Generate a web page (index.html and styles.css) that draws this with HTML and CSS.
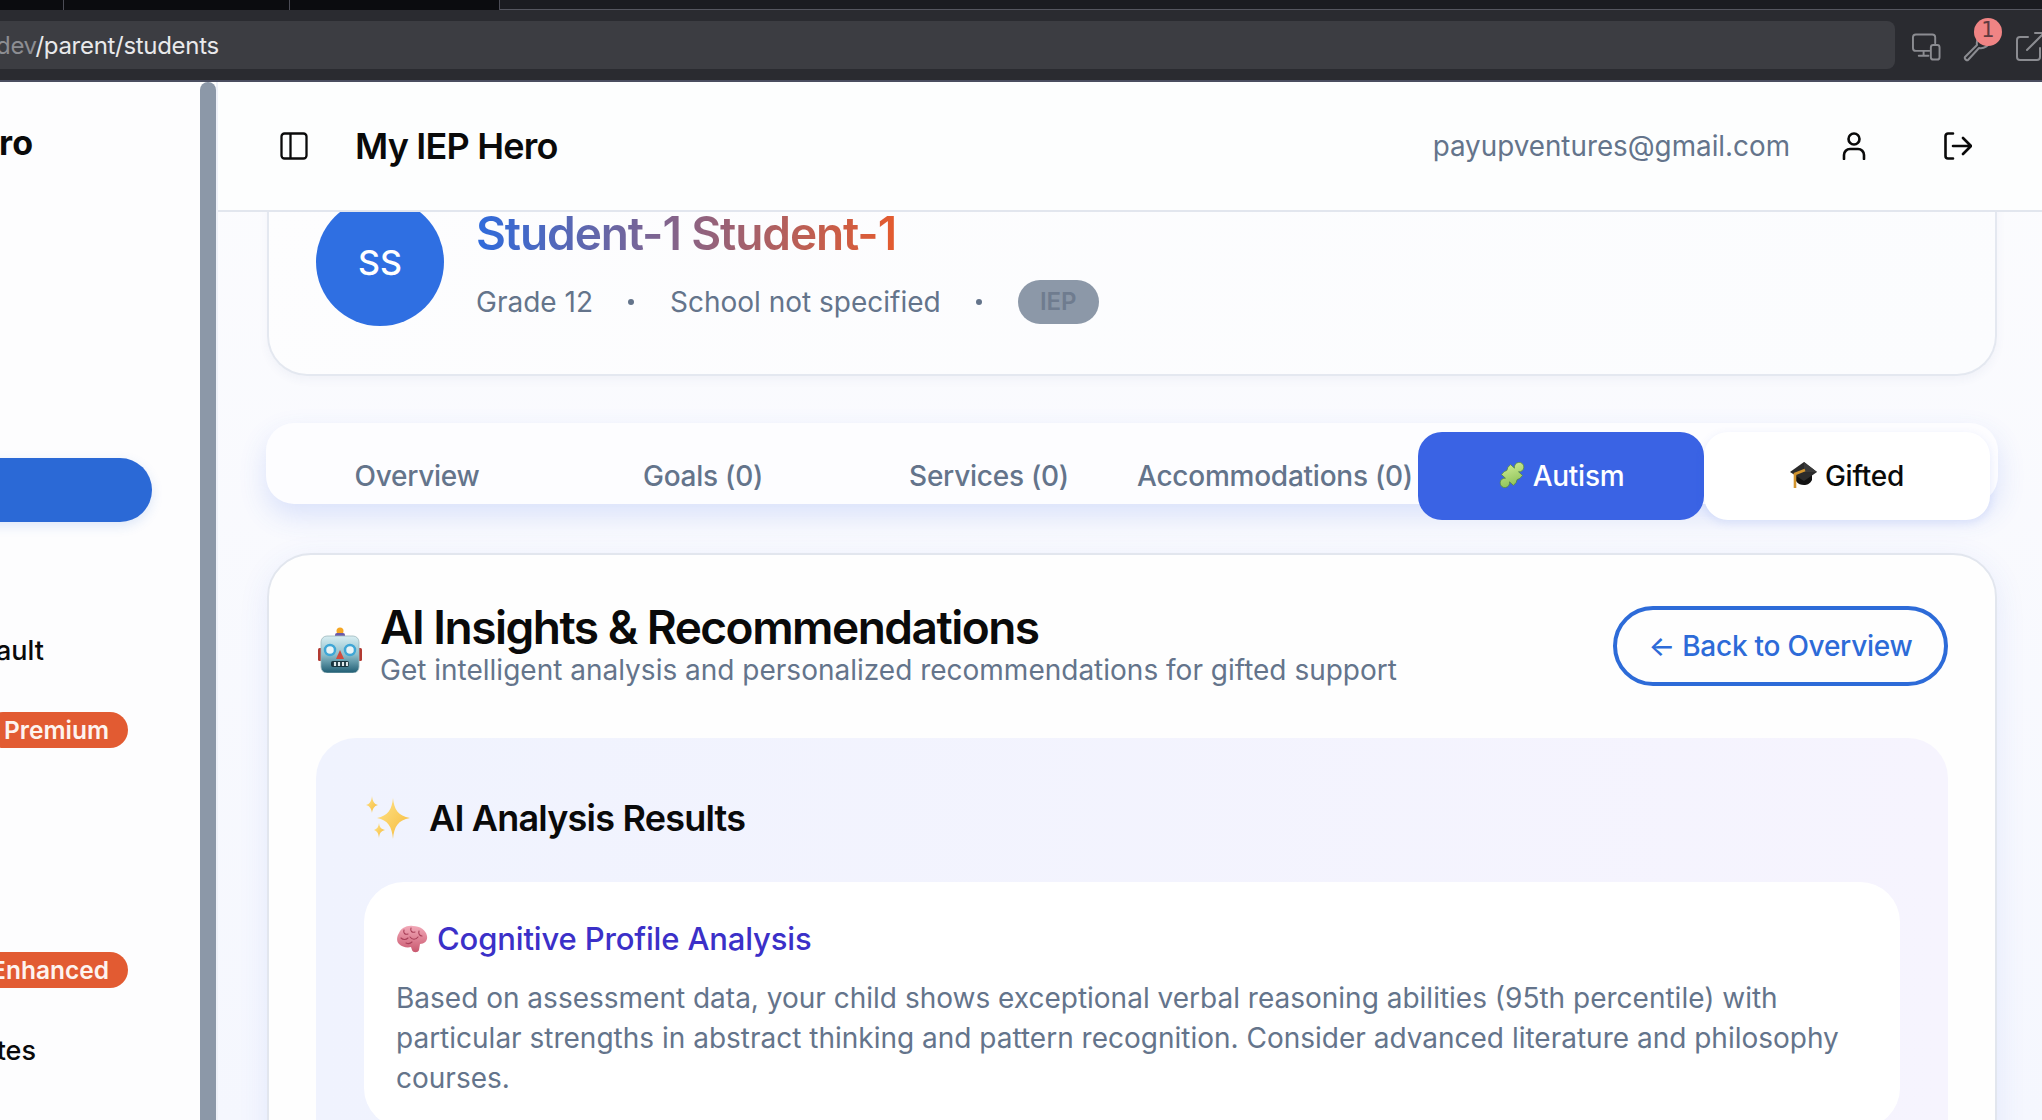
FILE: index.html
```html
<!DOCTYPE html>
<html lang="en">
<head>
<meta charset="utf-8">
<title>My IEP Hero</title>
<link rel="stylesheet" href="styles.css">
</head>
<body>
<div class="tabstrip">
  <div class="tabseg seg-a"></div>
  <div class="tabseg seg-b"></div>
  <div class="tabseg seg-c"></div>
  <div class="tabseg seg-rest"></div>
</div>
<div class="toolbar">
  <div class="addr"><span class="addr-dim">dev</span><span>/parent/students</span></div>
  <div class="tool-icons">
    <svg class="ti ti-dev" viewBox="0 0 30 28" fill="none" stroke="#8b8c91" stroke-width="2" stroke-linecap="round" stroke-linejoin="round"><path d="M18 18H4a3 3 0 0 1-3-3V4a3 3 0 0 1 3-3h17a3 3 0 0 1 3 3v6"/><path d="M12 18v5M7 23h10"/><rect x="19.500" y="12" width="9" height="15" rx="2.500"/></svg>
    <span class="wrench">
      <svg class="ti ti-wr" viewBox="0 0 30 30" fill="none" stroke="#8b8c91" stroke-width="2" stroke-linecap="round" stroke-linejoin="round"><path d="M2 25 14 13c-1-5 2-10 8-11l6 1-1 5c-1 6-6 9-11 8L5 28c-1 1-4-1-3-3z"/></svg>
      <span class="badge">1</span>
    </span>
    <svg class="ti ti-ext" viewBox="0 0 30 30" fill="none" stroke="#8b8c91" stroke-width="2" stroke-linecap="round" stroke-linejoin="round"><path d="M13 5H5a3 3 0 0 0-3 3v17a3 3 0 0 0 3 3h17a3 3 0 0 0 3-3v-9"/><path d="M12 18 29 1M20 1h9v9"/></svg>
  </div>
</div>
<div class="app">
  <aside class="sidebar">
    <div class="side-brand">My IEP Hero</div>
    <div class="side-active"></div>
    <div class="side-link side-vault">Vault</div>
    <div class="side-pill pill-premium">Premium</div>
    <div class="side-pill pill-enhanced">Enhanced</div>
    <div class="side-link side-notes">Notes</div>
  </aside>
  <div class="scrollbar"></div>
  <main class="main">
    <header class="topbar">
      <svg class="panel-icon" viewBox="0 0 28 28" fill="none" stroke="#0a0a0a" stroke-width="2.300" stroke-linejoin="round"><rect x="1.500" y="1.500" width="25" height="25" rx="3"/><path d="M10.500 1.500v25"/></svg>
      <div class="app-title">My IEP Hero</div>
      <div class="email">payupventures@gmail.com</div>
      <svg class="user-icon" viewBox="0 0 24 28" fill="none" stroke="#0a0a0a" stroke-width="2.600" stroke-linecap="round"><circle cx="12" cy="7" r="5.500"/><path d="M2 27v-4a6 6 0 0 1 6-6h8a6 6 0 0 1 6 6v4"/></svg>
      <svg class="logout-icon" viewBox="0 0 28 28" fill="none" stroke="#0a0a0a" stroke-width="2.600" stroke-linecap="round" stroke-linejoin="round"><path d="M9 1.500H4a2.500 2.500 0 0 0-2.500 2.500v20A2.500 2.500 0 0 0 4 26.500h5"/><path d="M9 14h18M19 6l8 8-8 8"/></svg>
    </header>
    <div class="content">
      <section class="student-card">
        <div class="avatar">SS</div>
        <div class="student-info">
          <h1 class="student-name">Student-1 Student-1</h1>
          <div class="student-meta">
            <span>Grade 12</span>
            <i class="dot"></i>
            <span>School not specified</span>
            <i class="dot"></i>
            <span class="iep">IEP</span>
          </div>
        </div>
      </section>

      <nav class="tabs">
        <div class="tab">Overview</div>
        <div class="tab">Goals (0)</div>
        <div class="tab">Services (0)</div>
        <div class="tab">Accommodations (0)</div>
        <div class="tab tab-active">
          <svg class="tab-emoji" viewBox="0 0 28 26"><defs><linearGradient id="pz" x1="0" y1="0" x2="1" y2="1"><stop offset="0" stop-color="#d3ee98"/><stop offset="1" stop-color="#84bd50"/></linearGradient></defs><path transform="rotate(42 14 13) translate(14 13) scale(1.350) translate(-14 -13)" d="M8 8h4a3.500 3.500 0 1 1 4 0h4v3a3 3 0 0 0 0 4v3h-4a3.500 3.500 0 1 1-4 0h-4v-3a3 3 0 0 0 0-4z" fill="url(#pz)" stroke="#55873a" stroke-width=".5"/></svg>
          Autism
        </div>
        <div class="tab tab-gifted">
          <svg class="tab-emoji" viewBox="0 0 28 26"><path d="M6 13v6c2 3 5 4 8 4s6-1 8-5v-6z" fill="#111"/><path d="M14 0 27 10 14 19 0 10z" fill="#2b2b2b"/><path d="M14 0 27 10 14 10z" fill="#3a3a3a"/><path d="M15 8 5 12v14" fill="none" stroke="#d2952f" stroke-width="2.600"/></svg>
          Gifted
        </div>
      </nav>

      <section class="insights">
        <div class="insights-head">
          <svg class="robot" viewBox="0 0 44 46"><defs><linearGradient id="rb" x1="0" y1="0" x2="0" y2="1"><stop offset="0" stop-color="#d8eef2"/><stop offset=".5" stop-color="#8fc0cc"/><stop offset="1" stop-color="#1f5d73"/></linearGradient></defs><rect x="0" y="21" width="5" height="13" rx="1.500" fill="#b23a32"/><rect x="39" y="21" width="5" height="13" rx="1.500" fill="#b23a32"/><circle cx="22" cy="4" r="3.500" fill="#f5a623"/><rect x="17" y="6" width="10" height="5" rx="2" fill="#6b5aa8"/><rect x="3" y="9" width="38" height="37" rx="6" fill="url(#rb)" stroke="#9db8bd" stroke-width=".8"/><circle cx="12" cy="23" r="5" fill="#e8f4f7" stroke="#3fa6d6" stroke-width="2.500"/><circle cx="32" cy="23" r="5" fill="#e8f4f7" stroke="#3fa6d6" stroke-width="2.500"/><path d="M22 23l4 9h-8z" fill="#d24a3c"/><rect x="13" y="34" width="18" height="6" rx="2" fill="#17333d"/><path d="M17 35v4M21 35v4M25 35v4M29 35v4" stroke="#dfe9ec" stroke-width="2.200"/></svg>
          <div class="insights-text">
            <h2 class="insights-title">AI Insights &amp; Recommendations</h2>
            <p class="insights-sub">Get intelligent analysis and personalized recommendations for gifted support</p>
          </div>
          <div class="back-btn">← Back to Overview</div>
        </div>

        <div class="panel">
          <div class="panel-head">
            <svg class="sparkles" viewBox="0 0 44 44"><defs><linearGradient id="sp" x1="0" y1="0" x2="1" y2="1"><stop offset="0" stop-color="#ffe48a"/><stop offset="1" stop-color="#f5b93a"/></linearGradient></defs><path d="M27 2c1 11 5 18 17 20-12 2-16 9-17 21-1-12-5-19-16-21 11-2 15-9 16-20z" fill="url(#sp)"/><path d="M6 0c.5 5 2 8 6 9-4 1-5.500 4-6 8-.5-4-2-7-6-8 4-1 5.500-4 6-9z" fill="url(#sp)"/><path d="M13 27c.5 4 2 6 6 7-4 1-5.500 3-6 8-.5-5-2-7-5-8 3-1 4.500-3 5-7z" fill="url(#sp)"/></svg>
            <h3 class="panel-title">AI Analysis Results</h3>
          </div>

          <article class="result">
            <h4 class="result-title">
              <svg class="brain" viewBox="0 0 32 28"><defs><linearGradient id="br" x1="0" y1="0" x2="0" y2="1"><stop offset="0" stop-color="#f2a9b8"/><stop offset="1" stop-color="#c9586f"/></linearGradient></defs><path d="M3 8c2-5 8-8 14-7 7 0 13 4 14 10 1 5-3 8-7 8l-1 6c-1 3-6 3-7 0l-1-3c-4 1-9 0-12-3-3-3-2-8 0-11z" fill="url(#br)"/><path d="M8 5c-1 3 1 5 4 4M15 3c-1 3 1 5 4 4M23 6c-1 3 1 5 3 5M5 13c2 2 5 2 7 0M14 12c2 3 6 3 8 0M10 18c2 1 4 1 6-1" fill="none" stroke="#a83f58" stroke-width="1.100" stroke-linecap="round"/></svg>
              Cognitive Profile Analysis
            </h4>
            <p class="result-body">Based on assessment data, your child shows exceptional verbal reasoning abilities (95th percentile) with particular strengths in abstract thinking and pattern recognition. Consider advanced literature and philosophy courses.</p>
          </article>
        </div>
      </section>
    </div>
  </main>
</div>
</body>
</html>
```

FILE: styles.css
```css
* { box-sizing: border-box; }
html, body { margin: 0; height: 100%; overflow: hidden; }
body { display: flex; flex-direction: column; font-family: Inter, "Liberation Sans", sans-serif; background: #fff; color: #0a0a0a; }
h1, h2, h3, h4, p { margin: 0; }

.tabstrip { display: flex; height: 10px; flex: none; }
.tabseg { height: 10px; background: #0b0c0f; border-right: 1px solid #4b4c55; }
.seg-a { width: 64px; }
.seg-b { width: 226px; }
.seg-c { width: 210px; }
.seg-rest { flex: 1; background: #1b1c21; border-right: 0; border-bottom: 1px solid #55565f; }

.toolbar { flex: none; height: 72px; background: #2a2b30; border-bottom: 2px solid #4a4e60; display: flex; align-items: flex-start; padding-top: 11px; overflow: hidden; }
.addr { width: 1895px; height: 48px; flex: none; background: #3c3d42; border-radius: 0 8px 8px 0; color: #e9e9eb; font-size: 24px; line-height: 50px; letter-spacing: -.3px; white-space: nowrap; }
.addr-dim { color: #8c8d92; margin-left: -4px; }
.tool-icons { display: flex; align-items: center; gap: 22px; margin-left: 17px; margin-top: 11px; flex: none; }
.ti { display: block; height: 28px; }
.ti-dev { width: 29px; }
.ti-wr { width: 30px; height: 30px; }
.ti-ext { width: 30px; height: 30px; }
.wrench { position: relative; display: block; }
.badge { position: absolute; left: 11px; top: -14px; width: 28px; height: 28px; border-radius: 50%; background: #f08484; color: #5e3b40; font-family: "DejaVu Sans", sans-serif; font-size: 21px; line-height: 25px; text-align: center; }

.app { flex: 1; display: flex; min-height: 0; }
.sidebar { width: 200px; flex: none; background: #fdfdfe; overflow: hidden; display: flex; flex-direction: column; align-items: flex-end; }
.side-brand { font-size: 34px; font-weight: 700; line-height: 44px; margin-top: 39px; margin-right: 167px; white-space: nowrap; }
.side-active { width: 260px; height: 64px; margin-top: 293px; margin-right: 48px; flex: none; border-radius: 32px; background: #2b69d6; box-shadow: 0 4px 12px rgba(43,105,214,.15); }
.side-link { font-size: 27px; font-weight: 500; line-height: 36px; white-space: nowrap; }
.side-vault { margin-top: 111px; margin-right: 156px; }
.side-pill { height: 36px; border-radius: 18px; background: #e25b32; color: #fdf3ef; font-size: 24.500px; font-weight: 600; line-height: 36px; padding: 0 19px; white-space: nowrap; margin-right: 72px; flex: none; }
.pill-premium { margin-top: 43px; }
.pill-enhanced { margin-top: 204px; }
.side-notes { margin-top: 45px; margin-right: 164px; }

.scrollbar { width: 16px; flex: none; background: #8c98a8; border-radius: 8px 8px 0 0; }
.main { flex: 1; min-width: 0; display: flex; flex-direction: column; border-left: 2px solid #eef1f8; background: linear-gradient(180deg, #fcfcfe, #f5f7fe); }

.topbar { flex: none; height: 130px; background: #fdfefe; border-bottom: 2px solid #e2e6ee; display: flex; align-items: center; position: relative; z-index: 2; padding-left: 62px; }
.panel-icon { width: 28px; height: 28px; flex: none; }
.app-title { font-size: 36px; font-weight: 600; margin-left: 47px; flex: 1; letter-spacing: -.8px; }
.email { font-size: 27.800px; color: #64748b; }
.user-icon { width: 24px; height: 28px; margin-left: 52px; flex: none; }
.logout-icon { width: 28px; height: 28px; margin-left: 78px; margin-right: 70px; flex: none; }

.content { flex: 1; min-height: 0; overflow: hidden; padding: 0 45px 0 49px; }
.student-card { margin-top: -62px; height: 226px; background: linear-gradient(135deg, #fdfdfe, #fbfcfe); border: 2px solid #e4e8f0; border-top: 0; border-radius: 40px; padding: 48px 47px 0; display: flex; box-shadow: 0 4px 10px rgba(60,80,140,.05); }
.avatar { width: 128px; height: 128px; border-radius: 50%; background: #2f6fe2; color: #fff; font-size: 34px; font-weight: 500; display: flex; align-items: center; justify-content: center; flex: none; }
.student-info { margin-left: 32px; margin-top: 5px; }
.student-name { display: inline-block; font-size: 46px; font-weight: 600; line-height: 60px; letter-spacing: -1.100px; white-space: nowrap; background: linear-gradient(90deg, #2f6bdc, #e45b2e); -webkit-background-clip: text; background-clip: text; color: transparent; }
.student-meta { display: flex; align-items: center; gap: 35.500px; margin-top: 17px; height: 44px; font-size: 28px; line-height: 46px; color: #64748b; }
.dot { width: 6px; height: 6px; border-radius: 50%; background: #64748b; flex: none; }
.iep { width: 81px; height: 44px; border-radius: 22px; background: #8c98a8; color: #6f7c8f; font-size: 24px; font-weight: 600; line-height: 44px; text-align: center; }

.tabs { margin-top: 47px; margin-left: -1px; margin-right: -1px; height: 81px; background: #fdfdff; border-radius: 28px; padding: 9px 8px 0; display: grid; grid-template-columns: repeat(6, 286px); grid-template-rows: 88px; box-shadow: 0 12px 28px rgba(58,99,228,.16); }
.tab { display: flex; align-items: center; justify-content: center; font-size: 28px; font-weight: 500; letter-spacing: -.25px; color: #64748b; white-space: nowrap; border-radius: 24px; gap: 7px; }
.tab-active { background: #3a63e4; color: #fff; }
.tab-gifted { background: #fff; color: #0a0a0a; box-shadow: 0 3px 10px rgba(58,99,228,.12); }
.tab-emoji { width: 28px; height: 26px; flex: none; margin-top: -3px; }

.insights { margin-top: 49px; height: 800px; background: #fefefe; border: 2px solid #e2e6ee; border-radius: 44px; padding: 48px 47px 0; box-shadow: 0 8px 30px rgba(58,99,228,.10); }
.insights-head { display: flex; align-items: center; height: 86px; margin-bottom: 49px; }
.robot { width: 44px; height: 46px; flex: none; margin-left: 2px; margin-top: 7px; }
.insights-text { flex: 1; margin-left: 18px; padding-bottom: 1px; }
.insights-title { font-size: 46px; font-weight: 600; line-height: 48px; letter-spacing: -1.500px; }
.insights-sub { font-size: 28px; line-height: 36px; margin-top: 1px; color: #64748b; }
.back-btn { width: 335px; height: 80px; border: 4px solid #2d6bd8; border-radius: 40px; color: #2d6bd8; font-size: 28px; font-weight: 500; letter-spacing: -.25px; display: flex; align-items: center; justify-content: center; flex: none; }

.panel { background: linear-gradient(90deg, #f0f3fe, #f6f4fe); border-radius: 40px; padding: 58px 48px 0; height: 500px; }
.panel-head { display: flex; align-items: center; gap: 19px; height: 44px; margin-bottom: 42px; }
.sparkles { width: 44px; height: 44px; flex: none; margin-left: 2px; }
.panel-title { font-size: 36px; font-weight: 600; line-height: 44px; letter-spacing: -.8px; }
.result { background: #fff; border-radius: 40px; padding: 37px 40px 30px 32px; }
.result-title { display: flex; align-items: center; gap: 9px; font-size: 31px; font-weight: 500; line-height: 40px; letter-spacing: -.15px; color: #3b30c8; margin-bottom: 19px; }
.brain { width: 32px; height: 28px; flex: none; }
.result-body { font-size: 28px; line-height: 40px; color: #64748b; }
```
